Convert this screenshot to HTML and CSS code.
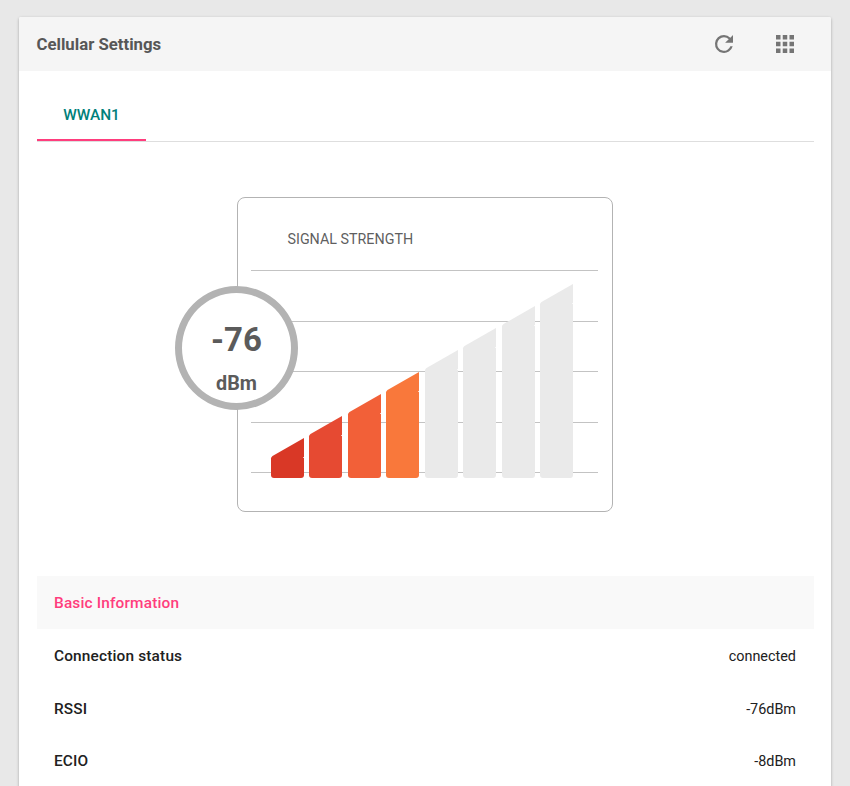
FILE: index.html
```html
<!DOCTYPE html>
<html lang="en">
<head>
<meta charset="utf-8">
<title>Cellular Settings</title>
<link rel="stylesheet" href="styles.css">
</head>
<body>
<main class="card">
  <header class="card-header">
    <h1 class="title">Cellular Settings</h1>
    <div class="actions">
      <svg class="icon" viewBox="-.4444 -.4444 24.8889 24.8889"><path d="M17.65 6.35A7.96 7.96 0 0 0 12 4a8 8 0 1 0 7.73 10h-2.08A6 6 0 1 1 12 6c1.66 0 3.14.69 4.22 1.78L13 11h7V4z"/></svg>
      <svg class="icon" viewBox="-.4444 -.4444 24.8889 24.8889"><path d="M4 8h4V4H4zm6 12h4v-4h-4zm-6 0h4v-4H4zm0-6h4v-4H4zm6 0h4v-4h-4zm6-10v4h4V4zm-6 4h4V4h-4zm6 6h4v-4h-4zm0 6h4v-4h-4z"/></svg>
    </div>
  </header>
  <nav class="tabs"><div class="tab">WWAN1</div></nav>
  <section class="signal">
    <h2 class="signal-title">SIGNAL STRENGTH</h2>
    <svg class="chart" viewBox="0 0 347 209" width="347" height="209">
      <path class="grid" d="M0 .5H347M0 51.5H347M0 101.5H347M0 152.5H347M0 202.5H347"/>
      <path fill="#d93826" d="M20 188.500Q20 187 21.500 186L53 168V205Q53 208 50 208H23Q20 208 20 205Z"/>
      <path fill="#e64a32" d="M58 166.500Q58 165 59.500 164L91 146V205Q91 208 88 208H61Q58 208 58 205Z"/>
      <path fill="#f26038" d="M97 144.500Q97 143 98.500 142L130 124V205Q130 208 127 208H100Q97 208 97 205Z"/>
      <path fill="#f9783b" d="M135 122.500Q135 121 136.500 120L168 102V205Q168 208 165 208H138Q135 208 135 205Z"/>
      <g fill="#eaeaea">
        <path d="M174 100.500Q174 99 175.500 98L207 80V205Q207 208 204 208H177Q174 208 174 205Z"/>
        <path d="M212 78.500Q212 77 213.500 76L245 58V205Q245 208 242 208H215Q212 208 212 205Z"/>
        <path d="M251 56.500Q251 55 252.500 54L284 36V205Q284 208 281 208H254Q251 208 251 205Z"/>
        <path d="M289 34.500Q289 33 290.500 32L322 14V205Q322 208 319 208H292Q289 208 289 205Z"/>
      </g>
      <path class="notches" d="M52.300 187.500h.7M90.300 165.500h.7M129.300 143.500h.7M167.300 121.500h.7M206.300 99.500h.7M244.300 77.500h.7M283.300 55.500h.7M321.300 33.500h.7"/>
    </svg>
    <div class="gauge"><span class="value">-76</span><span class="unit">dBm</span></div>
  </section>
  <section class="info">
    <h2 class="row info-title">Basic Information</h2>
    <div class="row"><span class="label">Connection status</span><span class="data">connected</span></div>
    <div class="row"><span class="label">RSSI</span><span class="data">-76dBm</span></div>
    <div class="row"><span class="label">ECIO</span><span class="data">-8dBm</span></div>
  </section>
</main>
</body>
</html>
```
FILE: styles.css
```css
* { box-sizing: border-box; }
html { overflow: hidden; }
body { margin: 0; padding: 17px 19px 0; height: 786px; overflow: hidden; background: #e8e8e8; font-family: Roboto, sans-serif; color: #212121; }
h1, h2 { margin: 0; }
.card { height: 800px; background: #fff; border-radius: 2px 2px 0 0; box-shadow: 0 1px 3px rgba(0,0,0,.3); overflow: hidden; }
.card-header { height: 54px; padding: 0 32px 0 17.5px; display: flex; align-items: center; justify-content: space-between; background: #f5f5f5; }
.title { font-size: 16.75px; line-height: 24px; font-weight: 700; color: #575757; }
.actions { display: flex; gap: 33px; }
.icon { display: block; width: 28px; height: 28px; fill: #757575; }
.tabs { margin: 18px 17px 0 18px; height: 53px; border-bottom: 1px solid #dedede; display: flex; }
.tab { width: 109px; height: 52px; border-bottom: 2px solid #ff3d7d; color: #00807a; text-align: center; font-size: 15.4px; font-weight: 500; line-height: 53px; }
.signal { position: relative; width: 376px; height: 315px; margin: 55px 0 0 218px; padding: 31px 0 0 13px; border: 1px solid #b3b3b3; border-radius: 8px; }
.signal-title { margin-left: 36.5px; height: 41px; font-size: 14.3px; line-height: 21px; font-weight: 400; color: #5f5f5f; }
.chart { display: block; }
.grid { stroke: #c3c3c3; fill: none; }
.notches { stroke: #fff; fill: none; }
.gauge { position: absolute; left: -63px; top: 88px; width: 123px; height: 124px; border: 7px solid #b3b3b3; border-radius: 50%; background: #fff; color: #5b5b5b; font-weight: 700; display: flex; flex-direction: column; align-items: center; padding-top: 27px; }
.value { font-size: 33px; line-height: 40px; }
.unit { margin-top: 12px; font-size: 19.8px; line-height: 24px; }
.info { margin: 64px 17px 0 18px; }
.row { height: 53px; display: flex; align-items: center; justify-content: space-between; padding: 0 18px 0 17px; font-size: 15.4px; line-height: 18px; }
.row:last-child { height: 51px; }
.info-title { background: #f9f9f9; color: #ff3d7d; font-weight: 500; letter-spacing: .17px; }
.label { font-weight: 500; letter-spacing: .17px; }
.data { padding-top: 3px; font-size: 14.4px; }
```
